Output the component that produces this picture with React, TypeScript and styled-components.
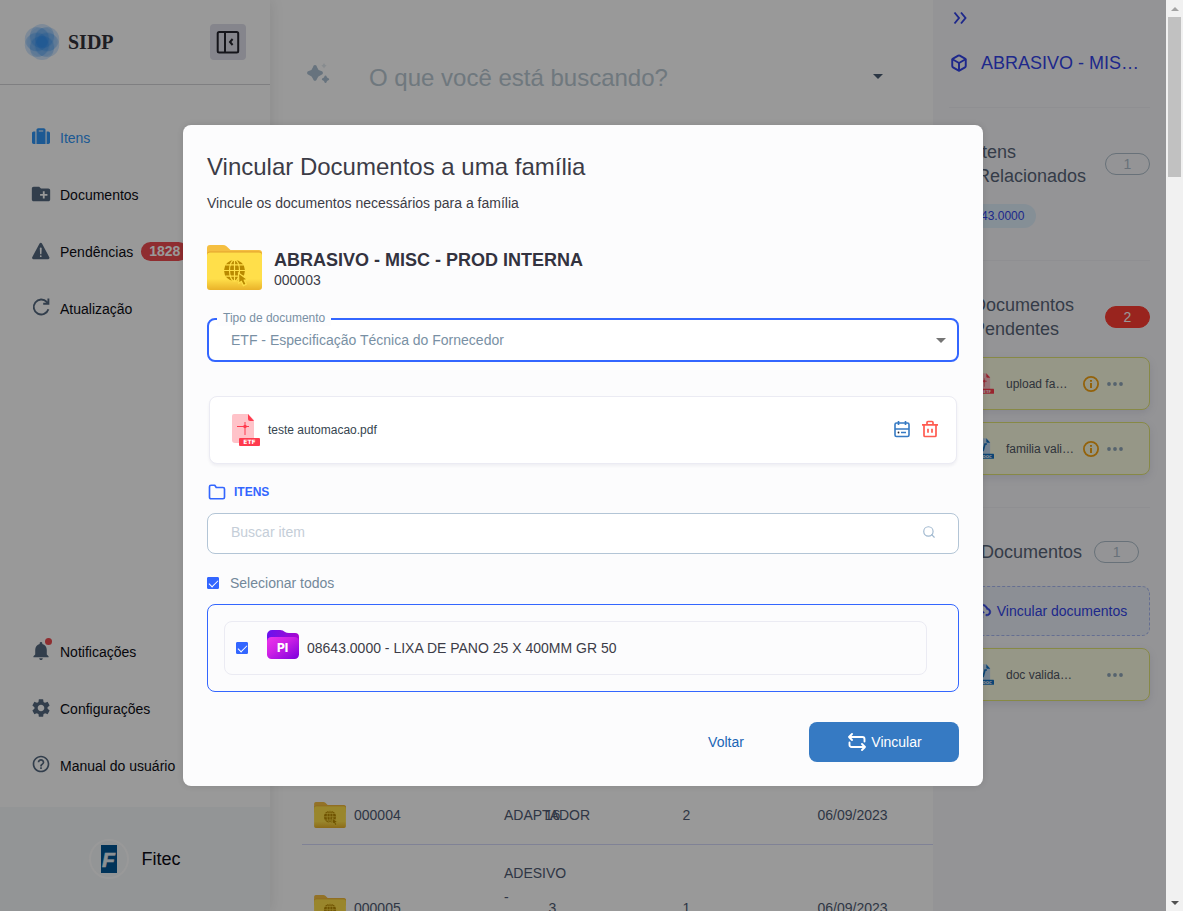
import React, { useState } from 'react';
import styled, { createGlobalStyle, css } from 'styled-components';
import { FaSuitcase } from 'react-icons/fa';
import { MdCreateNewFolder, MdSettings, MdHelpOutline } from 'react-icons/md';
import { IoWarning } from 'react-icons/io5';
import { IoMdNotifications } from 'react-icons/io';
import { AiOutlineCloudUpload } from 'react-icons/ai';
import { FiBox, FiFolder, FiSearch } from 'react-icons/fi';

const GlobalStyle = createGlobalStyle`
  * { box-sizing: border-box; }
  body {
    margin: 0;
    background: #fff;
    font-family: "Liberation Sans", Arial, sans-serif;
    font-size: 14px;
  }
  button, input, select { font: inherit; }
  h1, h2, h3, p { margin: 0; font-weight: 400; }
`;

const Page = styled.div`
  display: flex;
  height: 100vh;
  overflow: hidden;
`;

const Shell = styled.div`
  position: relative;
  display: flex;
  flex: 1;
  min-width: 0;
`;

/* ---------- scroll rail ---------- */

const Rail = styled.div`
  display: flex;
  flex-direction: column;
  align-items: center;
  flex: 0 0 17px;
  background: #f1f1f1;
`;

const RailArrow = styled.div<{ $down?: boolean }>`
  display: flex;
  align-items: center;
  justify-content: center;
  height: 17px;
  &::before {
    content: '';
    border: 4px solid transparent;
    ${p => p.$down
      ? css`border-top-color: #505050; border-bottom-width: 0;`
      : css`border-bottom-color: #a3a3a3; border-top-width: 0;`}
  }
`;

const RailTrack = styled.div`
  flex: 1;
`;

const RailThumb = styled.div`
  width: 13px;
  height: 160px;
  background: #c1c1c1;
`;

/* ---------- sidebar ---------- */

const Sidebar = styled.nav`
  display: flex;
  flex-direction: column;
  flex: 0 0 270px;
  background: #fff;
  box-shadow: 0 0 14px rgba(0, 0, 0, 0.1);
  z-index: 1;
`;

const Brand = styled.header`
  display: flex;
  align-items: center;
  gap: 8px;
  height: 85px;
  padding: 0 24px;
  border-bottom: 1px solid #d4d4d8;
`;

const BrandName = styled.span`
  flex: 1;
  font: bold 20px "Liberation Serif", "Times New Roman", serif;
  color: #33333b;
`;

const CollapseButton = styled.button`
  display: grid;
  place-items: center;
  width: 36px;
  height: 36px;
  padding: 0;
  border: 0;
  border-radius: 4px;
  background: #dedee9;
`;

const NavList = styled.ul<{ $bottom?: boolean }>`
  list-style: none;
  margin: 0;
  padding: ${p => (p.$bottom ? '0 0 13px' : '24px 0 0')};
  ${p => p.$bottom && 'margin-top: auto;'}
`;

const NavLink = styled.a<{ $active?: boolean }>`
  display: flex;
  align-items: center;
  gap: 8px;
  height: 57px;
  padding-left: 30px;
  color: ${p => (p.$active ? '#2f94f5' : '#0c0c14')};
  text-decoration: none;
  white-space: nowrap;
`;

const NavIcon = styled.span<{ $active?: boolean }>`
  position: relative;
  display: grid;
  place-items: center;
  width: 22px;
  height: 20px;
  margin-bottom: 4px;
  color: ${p => (p.$active ? '#2f94f5' : '#54687f')};
`;

const AlertDot = styled.i`
  position: absolute;
  top: -2px;
  right: 0;
  width: 7px;
  height: 7px;
  border-radius: 50%;
  background: #ef4b50;
`;

const CountPill = styled.span`
  height: 19px;
  padding: 0 8px;
  border-radius: 10px;
  background: #ef4b50;
  color: #fff;
  font-weight: 700;
  line-height: 19px;
`;

const Account = styled.footer`
  display: flex;
  align-items: center;
  justify-content: center;
  gap: 12px;
  height: 104px;
  background: #f5f8fb;
  color: #0c0c14;
  font-size: 18px;
`;

const Avatar = styled.span`
  display: grid;
  place-items: center;
  width: 40px;
  height: 40px;
  border: 2px solid #fff;
  border-radius: 50%;
`;

/* ---------- main listing ---------- */

const Main = styled.main`
  flex: 1;
  min-width: 0;
  padding: 54px 0 0 32px;
  overflow: hidden;
`;

const SearchBar = styled.label`
  display: flex;
  align-items: center;
  height: 44px;
  padding: 0 50px 0 4px;
`;

const SearchInput = styled.input`
  flex: 1;
  min-width: 0;
  margin-left: 37px;
  padding: 4px 0 0;
  border: 0;
  outline: 0;
  background: none;
  font-size: 24px;
  &::placeholder { color: #b9c8d2; }
`;

const Caret = styled.span<{ $color: string }>`
  border: 5px solid transparent;
  border-top-color: ${p => p.$color};
  border-bottom-width: 0;
  pointer-events: none;
`;

const Listing = styled.table`
  width: 100%;
  margin-top: 688px;
  border-collapse: collapse;
  table-layout: fixed;
  color: #4f5b73;
`;

const Row = styled.tr<{ $tall?: boolean }>`
  height: ${p => (p.$tall ? 128 : 58)}px;
  border-bottom: 1px solid #d5d9fa;
`;

const Cell = styled.td<{ $align?: 'center'; $top?: boolean }>`
  padding: ${p => (p.$top ? '16px 0' : '0')};
  text-align: ${p => p.$align ?? 'left'};
  vertical-align: ${p => (p.$top ? 'top' : 'middle')};
  line-height: 24px;
`;

const DateCell = styled(Cell)`
  padding-right: 20px;
`;

const CodeCell = styled.div`
  display: flex;
  align-items: center;
  gap: 8px;
  padding-left: 12px;
`;

/* ---------- details panel ---------- */

const Details = styled.aside`
  flex: 0 0 233px;
  padding: 0 16px;
  background: #f7f7fa;
`;

const PanelToggle = styled.button`
  display: block;
  height: 36px;
  padding: 0 4px;
  border: 0;
  background: none;
`;

const DetailsTitle = styled.h2`
  display: flex;
  align-items: center;
  gap: 13px;
  height: 54px;
  padding-left: 1px;
  color: #3344e8;
  font-size: 18px;
  white-space: nowrap;
`;

const Section = styled.section`
  padding: 32px 0;
  border-top: 1px solid #efeff3;
`;

const FirstSection = styled(Section)`
  margin-top: 17px;
`;

const SectionHead = styled.div<{ $indent: number; $roomy?: boolean }>`
  display: flex;
  align-items: center;
  justify-content: ${p => (p.$roomy ? 'flex-start' : 'space-between')};
  gap: 12px;
  margin-bottom: ${p => (p.$roomy ? 22 : 16)}px;
  padding-left: ${p => p.$indent}px;
`;

const SectionTitle = styled.h3`
  color: #596579;
  font-size: 18px;
  line-height: 24px;
`;

const Badge = styled.span<{ $alert?: boolean }>`
  flex: 0 0 45px;
  height: 22px;
  border: 1px solid ${p => (p.$alert ? '#ff3d33' : '#adbdca')};
  border-radius: 11px;
  background: ${p => (p.$alert ? '#ff3d33' : 'transparent')};
  color: ${p => (p.$alert ? '#fff' : '#adbdca')};
  line-height: 20px;
  text-align: center;
`;

const Chip = styled.span`
  display: block;
  width: max-content;
  padding: 0 12px;
  border-radius: 12px;
  background: #deeefb;
  color: #3344e8;
  font-size: 12px;
  line-height: 24px;
`;

const DocStack = styled.div`
  display: grid;
  gap: 12px;
`;

const DocCard = styled.div`
  display: flex;
  align-items: center;
  height: 53px;
  padding: 0 26px;
  border: 1px solid #e2e576;
  border-radius: 8px;
  background: #fbfce2;
  box-shadow: 0 3px 8px rgba(90, 90, 150, 0.14);
  color: #4f5663;
  font-size: 12px;
`;

const DocName = styled.span`
  flex: 1;
  padding-left: 12px;
  white-space: nowrap;
`;

const DocActions = styled.span`
  display: flex;
  gap: 8px;
`;

const LinkBox = styled.button`
  display: flex;
  align-items: center;
  justify-content: center;
  gap: 5px;
  width: 100%;
  height: 50px;
  border: 1px dashed #a9b8f2;
  border-radius: 8px;
  background: #e9eff8;
  color: #3344e8;
`;

/* ---------- dialog ---------- */

const Scrim = styled.div`
  position: absolute;
  inset: 0;
  z-index: 2;
  display: grid;
  place-items: center;
  background: rgba(0, 0, 0, 0.4);
`;

const Dialog = styled.section`
  width: 800px;
  max-width: 100%;
  padding: 24px;
  border-radius: 8px;
  background: #fcfcfd;
  box-shadow: 0 0 6px rgba(0, 0, 0, 0.12);
  color: #3c3c47;
`;

const DialogTitle = styled.h1`
  font-size: 24px;
  line-height: 36px;
`;

const DialogText = styled.p`
  margin-top: 8px;
  line-height: 20px;
`;

const Family = styled.div`
  display: flex;
  align-items: flex-end;
  gap: 12px;
  height: 46px;
  margin: 31px 0 28px;
  line-height: 20px;
`;

const FamilyName = styled.h2`
  color: #33333f;
  font-size: 18px;
  font-weight: 700;
  line-height: 20px;
`;

const Field = styled.div<{ $focused?: boolean }>`
  position: relative;
  display: flex;
  align-items: center;
  height: ${p => (p.$focused ? 44 : 41)}px;
  padding: ${p => (p.$focused ? '0 11px 0 0' : '0 22px 3px 0')};
  border: ${p => (p.$focused ? '2px solid #3366ff' : '1px solid #b3c5d6')};
  border-radius: 8px;
  background: #fff;
  color: #a0b8cf;
`;

const FieldLabel = styled.label`
  position: absolute;
  top: -10px;
  left: 8px;
  padding: 0 6px;
  background: #fdfdfe;
  color: #7990a4;
  font-size: 12px;
  line-height: 16px;
`;

const DocTypeSelect = styled.select`
  flex: 1;
  height: 32px;
  padding: 0 0 0 22px;
  border: 0;
  outline: 0;
  appearance: none;
  background: transparent;
  color: #7990a4;
`;

const ItemSearch = styled.input`
  flex: 1;
  min-width: 0;
  padding: 0 0 0 23px;
  border: 0;
  outline: 0;
  background: none;
  &::placeholder { color: #c5ced8; }
`;

const FileCard = styled.div`
  display: flex;
  align-items: center;
  gap: 8px;
  height: 68px;
  margin: 34px 2px 16px;
  padding: 0 16px 0 22px;
  border: 1px solid #ebebf3;
  border-radius: 8px;
  background: #fff;
  box-shadow: 0 2px 3px rgba(40, 40, 90, 0.06);
  color: #36454f;
  font-size: 12px;
`;

const FileName = styled.span`
  flex: 1;
`;

const IconButton = styled.button`
  display: grid;
  place-items: center;
  width: 20px;
  height: 20px;
  padding: 0 0 2px;
  border: 0;
  background: none;
`;

const ItemsHeading = styled.h3`
  display: flex;
  align-items: center;
  gap: 8px;
  height: 24px;
  margin-bottom: 9px;
  padding-left: 1px;
  color: #3366ff;
  font-size: 12px;
  font-weight: 700;
`;

const CheckLabel = styled.label`
  display: flex;
  align-items: center;
  gap: 11px;
  margin: 19px 0 11px;
  color: #73889a;
  line-height: 20px;
`;

const Check = styled.input`
  display: grid;
  place-items: center;
  width: 12px;
  height: 12px;
  margin: 0;
  border: 1px solid #3366ff;
  border-radius: 1px;
  appearance: none;
  background: #fff;
  &:checked { background: #3366ff; }
  &:checked::after {
    content: '';
    width: 8px;
    height: 4px;
    margin-bottom: 2px;
    border: solid #fff;
    border-width: 0 0 1px 1px;
    transform: rotate(-45deg);
  }
`;

const ItemList = styled.div`
  padding: 16px 31px 16px 16px;
  border: 1px solid #3366ff;
  border-radius: 8px;
`;

const ItemCard = styled.label`
  display: flex;
  align-items: center;
  height: 54px;
  padding-left: 11px;
  border: 1px solid #ebebf3;
  border-radius: 8px;
`;

const ItemIcon = styled.span`
  display: flex;
  margin: 0 8px 7px 19px;
`;

const Actions = styled.div`
  display: flex;
  justify-content: flex-end;
  gap: 8px;
  margin-top: 30px;
`;

const ActionButton = styled.button<{ $primary?: boolean }>`
  display: flex;
  align-items: center;
  justify-content: center;
  gap: 5px;
  width: 150px;
  height: 40px;
  padding: ${p => (p.$primary ? '0 0 0 2px' : '0')};
  border: 0;
  border-radius: 8px;
  background: ${p => (p.$primary ? '#367ac3' : 'transparent')};
  color: ${p => (p.$primary ? '#fff' : '#1a65b5')};
`;

/* ---------- drawings ---------- */

const Logo = () => (
  <svg width="36" height="36" viewBox="-18 -18 36 36" aria-hidden="true">
    {[0, 60, 120, 180, 240, 300].map(a => (
      <circle key={a} cy="-6" r="12" fill="#1e88f5" fillOpacity=".2" transform={`rotate(${a})`} />
    ))}
    {[30, 90, 150, 210, 270, 330].map(a => (
      <circle key={a} cy="-5" r="10" fill="#1e88f5" fillOpacity=".1" transform={`rotate(${a})`} />
    ))}
  </svg>
);

const PanelIcon = () => (
  <svg width="24" height="24" viewBox="0 0 24 24" fill="none" stroke="#23232d" strokeWidth="2" aria-hidden="true">
    <rect x="1.700" y="2" width="20.500" height="20.500" rx="1.500" />
    <path d="M9 2v20M16.600 9 14 12l2.600 3" />
  </svg>
);

const ReloadIcon = () => (
  <svg width="20" height="20" viewBox="0 0 20 20" fill="none" stroke="currentColor" strokeWidth="1.900" aria-hidden="true">
    <path d="M17.400 12.300A7.500 7.500 0 1 1 15.800 5L17 6.300" />
    <path d="M17.400 1.500v5.200h-5.200" />
  </svg>
);

const Sparkles = () => (
  <svg width="26" height="26" viewBox="0 0 26 26" fill="#acc0d2" aria-hidden="true">
    <path d="M9 2q1.600 0 2.200 2.400.7 2.700 3.400 3.400Q17 8.400 17 10t-2.400 2.200q-2.700.7-3.400 3.400Q10.600 18 9 18t-2.200-2.400q-.7-2.700-3.400-3.400Q1 11.600 1 10t2.400-2.200q2.700-.7 3.400-3.400Q7.400 2 9 2Z" />
    <path d="M19.500 12.500q.9 0 1.200 1.300.2 1 1.200 1.300 1.300.3 1.300 1.200t-1.300 1.200q-1 .3-1.200 1.300-.3 1.300-1.200 1.300t-1.200-1.300q-.2-1-1.200-1.300-1.300-.3-1.300-1.200t1.300-1.200q1-.3 1.200-1.300.3-1.300 1.200-1.300Z" />
    <path opacity=".35" d="m18 0 1 1.700 1.700 1-1.700 1L18 5.400l-1-1.700-1.700-1 1.700-1Z" />
  </svg>
);

const WebFolder = ({ width, id }: { width: number; id: string }) => (
  <svg width={width} height={Math.round((width * 45) / 55)} viewBox="0 0 55 45" aria-hidden="true">
    <defs>
      <linearGradient id={id} x1="0" y1="0" x2="0" y2="1">
        <stop offset="0" stopColor="#ffdf4a" />
        <stop offset=".7" stopColor="#ffdf4a" />
        <stop offset="1" stopColor="#e9b229" />
      </linearGradient>
    </defs>
    <path d="M0 3a3 3 0 0 1 3-3h13q2 0 3.500 1.300L23.500 5H52a3 3 0 0 1 3 3v10H0Z" fill="#f5bf41" />
    <path d="M0 9.500a3 3 0 0 1 3-3h49a3 3 0 0 1 3 3V12H0Z" fill="#e3a32c" />
    <path d="M0 10.500a3 3 0 0 1 3-3h49a3 3 0 0 1 3 3V42a3 3 0 0 1-3 3H3a3 3 0 0 1-3-3Z" fill={`url(#${id})`} />
    <circle cx="27.500" cy="25.500" r="10.500" fill="#b98a00" />
    <g fill="none" stroke="#ffdf4a" strokeWidth="1.200">
      <ellipse cx="27.500" cy="25.500" rx="5" ry="10.500" />
      <path d="M27.500 15v21M17 25.500h21M18.500 19.800h18M18.500 31.200h18" />
    </g>
    <path d="m31.500 28 .3 10.200 2.600-1.900 2 4.300 2.800-1.300-2-4.200 3.300-.5Z" fill="#b98a00" stroke="#ffdf4a" strokeWidth="1.200" />
  </svg>
);

type FileTone = 'red' | 'blue';

const FileIcon = ({ tone, tag, width }: { tone: FileTone; tag: string; width: number }) => {
  const strong = tone === 'red' ? '#ff3b4e' : '#1272c4';
  const soft = tone === 'red' ? '#ffc3c9' : '#c4dcf3';
  return (
    <svg width={width} height={Math.round((width * 32) / 28)} viewBox="0 0 28 32" aria-hidden="true">
      <path d="M2 0h14l6 6v20a3 3 0 0 1-3 3H3a3 3 0 0 1-3-3V2a2 2 0 0 1 2-2Z" fill={soft} />
      <path d="M16 0l6 7h-4a2 2 0 0 1-2-2Z" fill={strong} />
      {tone === 'red' ? (
        <>
          <path d="M5 12.500h12M13 8v13" stroke={strong} strokeWidth="1" fill="none" />
          <circle cx="13" cy="12.500" r="1.800" fill={strong} />
        </>
      ) : (
        <path d="M2 10l3 10 4-9 2 9 3-11h3" stroke={strong} strokeWidth="2.500" fill="none" />
      )}
      <rect x="7" y="24" width="21" height="8" rx="1" fill={strong} />
      <text x="17.500" y="30.300" textAnchor="middle" fontFamily="DejaVu Sans" fontWeight="700" fontSize="6" fill="#fff">{tag}</text>
    </svg>
  );
};

const ItemFolder = () => (
  <svg width="32" height="29" viewBox="0 0 32 29" aria-hidden="true">
    <defs>
      <linearGradient id="item-front" x1="0" y1="0" x2="1" y2="1">
        <stop offset="0" stopColor="#ee35ea" />
        <stop offset=".4" stopColor="#cf22e6" />
        <stop offset="1" stopColor="#7a00dc" />
      </linearGradient>
      <linearGradient id="item-back" x1="0" y1="0" x2="1" y2="0">
        <stop offset="0" stopColor="#6a12ee" />
        <stop offset="1" stopColor="#a808cf" />
      </linearGradient>
    </defs>
    <path d="M0 5a5 5 0 0 1 5-5h8q3 0 5 2 1.500 1 4 1h6a4 4 0 0 1 4 4v8H0Z" fill="url(#item-back)" />
    <rect y="7" width="32" height="22" rx="4.500" fill="url(#item-front)" />
    <text x="15.500" y="22" textAnchor="middle" fontFamily="Inter, Liberation Sans" fontWeight="800" fontSize="12" fill="#fff">PI</text>
  </svg>
);

const FitecMark = () => (
  <svg width="16" height="28" viewBox="0 0 16 28" aria-hidden="true">
    <rect width="16" height="28" fill="#005694" />
    <text x="7.500" y="22" textAnchor="middle" fontFamily="Liberation Sans" fontWeight="700" fontStyle="italic" fontSize="21" fill="#e8f0f5" stroke="#e8f0f5" strokeWidth=".6">F</text>
  </svg>
);

const DoubleChevron = () => (
  <svg width="14" height="16" viewBox="0 0 14 16" fill="none" stroke="#3344e8" strokeWidth="1.900" aria-hidden="true">
    <path d="M1.500 3.500 6 9l-4.500 5.500M8 3.500 12.500 9 8 14.500" />
  </svg>
);

const InfoIcon = () => (
  <svg width="16" height="16" viewBox="0 0 16 16" aria-hidden="true">
    <circle cx="8" cy="8" r="7.100" fill="none" stroke="#f5a312" strokeWidth="1.800" />
    <path d="M8 7v5M8 4v1.800" stroke="#f5a312" strokeWidth="2" />
  </svg>
);

const DotsIcon = () => (
  <svg width="16" height="16" viewBox="0 0 16 16" fill="#8fa5b8" aria-hidden="true">
    <circle cx="2" cy="8" r="1.900" />
    <circle cx="8" cy="8" r="1.900" />
    <circle cx="14" cy="8" r="1.900" />
  </svg>
);

const CalendarIcon = () => (
  <svg width="16" height="18" viewBox="0 0 16 18" fill="none" stroke="#367ac3" strokeWidth="1.600" aria-hidden="true">
    <rect x="1" y="3" width="14" height="13.500" rx="1.500" />
    <path d="M1 9h14M4.500 1v4M11.500 1v4M7 12.500h5" />
    <circle cx="4.500" cy="12.500" r=".9" fill="#23232d" stroke="none" />
  </svg>
);

const TrashIcon = () => (
  <svg width="16" height="18" viewBox="0 0 16 18" fill="none" stroke="#ff5b50" strokeWidth="1.700" aria-hidden="true">
    <path d="M0 4.800h16M2 4.800v10.700a1 1 0 0 0 1 1h10a1 1 0 0 0 1-1V4.800M5 4.800V2.500a1 1 0 0 1 1-1h4a1 1 0 0 1 1 1v2.300M6 8.800v4M10 8.800v4" />
  </svg>
);

const SwapIcon = () => (
  <svg width="18" height="18" viewBox="0 0 18 18" fill="none" stroke="#fff" strokeWidth="1.900" strokeLinecap="round" strokeLinejoin="round" aria-hidden="true">
    <path d="M4 1 1 4l3 3M1 4h13.500a2 2 0 0 1 2 2v2.500M14 17l3-3-3-3M17 14H3.500a2 2 0 0 1-2-2V9.500" />
  </svg>
);

/* ---------- data ---------- */

const pending: { name: string; tone: FileTone; tag: string }[] = [
  { name: 'upload fa…', tone: 'red', tag: 'ETF' },
  { name: 'familia vali…', tone: 'blue', tag: 'DOC' },
];

const families = [
  { code: '000004', name: 'ADAPTADOR', items: 16, docs: 2, date: '06/09/2023' },
  { code: '000005', name: 'ADESIVO -', items: 3, docs: 1, date: '06/09/2023', tall: true },
];

export default function App() {
  const [selected, setSelected] = useState(true);
  const toggle = () => setSelected(v => !v);

  return (
    <Page>
      <GlobalStyle />
      <Shell>
        <Sidebar>
          <Brand>
            <Logo />
            <BrandName>SIDP</BrandName>
            <CollapseButton aria-label="Recolher menu"><PanelIcon /></CollapseButton>
          </Brand>
          <NavList>
            <li><NavLink href="#itens" $active><NavIcon $active><FaSuitcase size={18} /></NavIcon>Itens</NavLink></li>
            <li><NavLink href="#documentos"><NavIcon><MdCreateNewFolder size={22} /></NavIcon>Documentos</NavLink></li>
            <li>
              <NavLink href="#pendencias">
                <NavIcon><IoWarning size={22} /></NavIcon>
                Pendências
                <CountPill>1828</CountPill>
              </NavLink>
            </li>
            <li><NavLink href="#atualizacao"><NavIcon><ReloadIcon /></NavIcon>Atualização</NavLink></li>
          </NavList>
          <NavList $bottom>
            <li><NavLink href="#notificacoes"><NavIcon><IoMdNotifications size={22} /><AlertDot /></NavIcon>Notificações</NavLink></li>
            <li><NavLink href="#configuracoes"><NavIcon><MdSettings size={22} /></NavIcon>Configurações</NavLink></li>
            <li><NavLink href="#manual"><NavIcon><MdHelpOutline size={20} /></NavIcon>Manual do usuário</NavLink></li>
          </NavList>
          <Account><Avatar><FitecMark /></Avatar>Fitec</Account>
        </Sidebar>

        <Main>
          <SearchBar>
            <Sparkles />
            <SearchInput aria-label="Busca" placeholder="O que você está buscando?" />
            <Caret $color="#4a5d73" />
          </SearchBar>
          <Listing>
            <colgroup>
              <col width="202" />
              <col width="20" />
              <col width="57" />
              <col width="211" />
              <col />
            </colgroup>
            <tbody>
              {families.map(f => (
                <Row key={f.code} $tall={f.tall}>
                  <Cell><CodeCell><WebFolder width={32} id={`f${f.code}`} />{f.code}</CodeCell></Cell>
                  <Cell $top={f.tall}>{f.name}</Cell>
                  <Cell $align="center">{f.items}</Cell>
                  <Cell $align="center">{f.docs}</Cell>
                  <DateCell $align="center">{f.date}</DateCell>
                </Row>
              ))}
            </tbody>
          </Listing>
        </Main>

        <Details>
          <PanelToggle aria-label="Fechar painel"><DoubleChevron /></PanelToggle>
          <DetailsTitle><FiBox size={18} strokeWidth={2.6} />ABRASIVO - MIS…</DetailsTitle>
          <FirstSection>
            <SectionHead $indent={28}>
              <SectionTitle>Itens Relacionados</SectionTitle>
              <Badge>1</Badge>
            </SectionHead>
            <Chip>08643.0000</Chip>
          </FirstSection>
          <Section>
            <SectionHead $indent={24}>
              <SectionTitle>Documentos Pendentes</SectionTitle>
              <Badge $alert>2</Badge>
            </SectionHead>
            <DocStack>
              {pending.map(d => (
                <DocCard key={d.name}>
                  <FileIcon tone={d.tone} tag={d.tag} width={18} />
                  <DocName>{d.name}</DocName>
                  <DocActions><InfoIcon /><DotsIcon /></DocActions>
                </DocCard>
              ))}
            </DocStack>
          </Section>
          <Section>
            <SectionHead $indent={32} $roomy>
              <SectionTitle>Documentos</SectionTitle>
              <Badge>1</Badge>
            </SectionHead>
            <DocStack>
              <LinkBox><AiOutlineCloudUpload size={20} strokeWidth={30} />Vincular documentos</LinkBox>
              <DocCard>
                <FileIcon tone="blue" tag="DOC" width={18} />
                <DocName>doc valida…</DocName>
                <DocActions><DotsIcon /></DocActions>
              </DocCard>
            </DocStack>
          </Section>
        </Details>

        <Scrim>
          <Dialog role="dialog" aria-labelledby="dialog-title">
            <DialogTitle id="dialog-title">Vincular Documentos a uma família</DialogTitle>
            <DialogText>Vincule os documentos necessários para a família</DialogText>
            <Family>
              <WebFolder width={55} id="family" />
              <div>
                <FamilyName>ABRASIVO - MISC - PROD INTERNA</FamilyName>
                <p>000003</p>
              </div>
            </Family>
            <Field $focused>
              <FieldLabel htmlFor="doc-type">Tipo de documento</FieldLabel>
              <DocTypeSelect id="doc-type">
                <option>ETF - Especificação Técnica do Fornecedor</option>
              </DocTypeSelect>
              <Caret $color="#757575" />
            </Field>
            <FileCard>
              <FileIcon tone="red" tag="ETF" width={28} />
              <FileName>teste automacao.pdf</FileName>
              <IconButton aria-label="Definir data"><CalendarIcon /></IconButton>
              <IconButton aria-label="Excluir"><TrashIcon /></IconButton>
            </FileCard>
            <ItemsHeading><FiFolder size={18} strokeWidth={2.2} />ITENS</ItemsHeading>
            <Field>
              <ItemSearch aria-label="Buscar item" placeholder="Buscar item" />
              <FiSearch size={14} />
            </Field>
            <CheckLabel>
              <Check type="checkbox" checked={selected} onChange={toggle} />
              Selecionar todos
            </CheckLabel>
            <ItemList>
              <ItemCard>
                <Check type="checkbox" checked={selected} onChange={toggle} />
                <ItemIcon><ItemFolder /></ItemIcon>
                08643.0000 - LIXA DE PANO 25 X 400MM GR 50
              </ItemCard>
            </ItemList>
            <Actions>
              <ActionButton>Voltar</ActionButton>
              <ActionButton $primary><SwapIcon />Vincular</ActionButton>
            </Actions>
          </Dialog>
        </Scrim>
      </Shell>
      <Rail aria-hidden="true">
        <RailArrow />
        <RailThumb />
        <RailTrack />
        <RailArrow $down />
      </Rail>
    </Page>
  );
}
